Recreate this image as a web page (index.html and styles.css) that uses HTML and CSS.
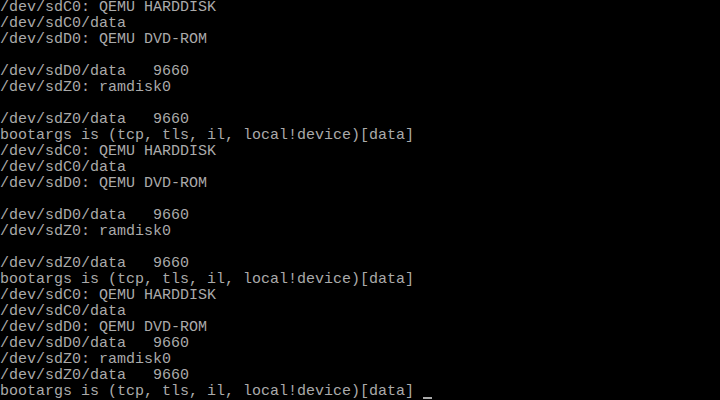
FILE: index.html
```html
<!DOCTYPE html>
<html>
<head>
<meta charset="utf-8">
<link rel="stylesheet" href="styles.css">
</head>
<body>
<pre class="console">/dev/sdC0: QEMU HARDDISK
/dev/sdC0/data
/dev/sdD0: QEMU DVD-ROM

/dev/sdD0/data   9660
/dev/sdZ0: ramdisk0

/dev/sdZ0/data   9660
bootargs is (tcp, tls, il, local!device)[data]
/dev/sdC0: QEMU HARDDISK
/dev/sdC0/data
/dev/sdD0: QEMU DVD-ROM

/dev/sdD0/data   9660
/dev/sdZ0: ramdisk0

/dev/sdZ0/data   9660
bootargs is (tcp, tls, il, local!device)[data]
/dev/sdC0: QEMU HARDDISK
/dev/sdC0/data
/dev/sdD0: QEMU DVD-ROM
/dev/sdD0/data   9660
/dev/sdZ0: ramdisk0
/dev/sdZ0/data   9660
bootargs is (tcp, tls, il, local!device)[data] <span class="cursor"></span></pre>
</body>
</html>
```

FILE: styles.css
```css
html, body {
  margin: 0;
  padding: 0;
  background: #000;
  width: 720px;
  height: 400px;
  overflow: hidden;
}
.console {
  margin: 0;
  padding: 0;
  font-family: "Liberation Mono", "DejaVu Sans Mono", monospace;
  font-size: 15px;
  line-height: 16px;
  color: #aaaaaa;
  white-space: pre;
}
.cursor {
  display: inline-block;
  width: 9px;
  height: 16px;
  vertical-align: top;
  background: linear-gradient(to bottom, transparent 13px, #aaaaaa 13px, #aaaaaa 15px, transparent 15px);
}
```
